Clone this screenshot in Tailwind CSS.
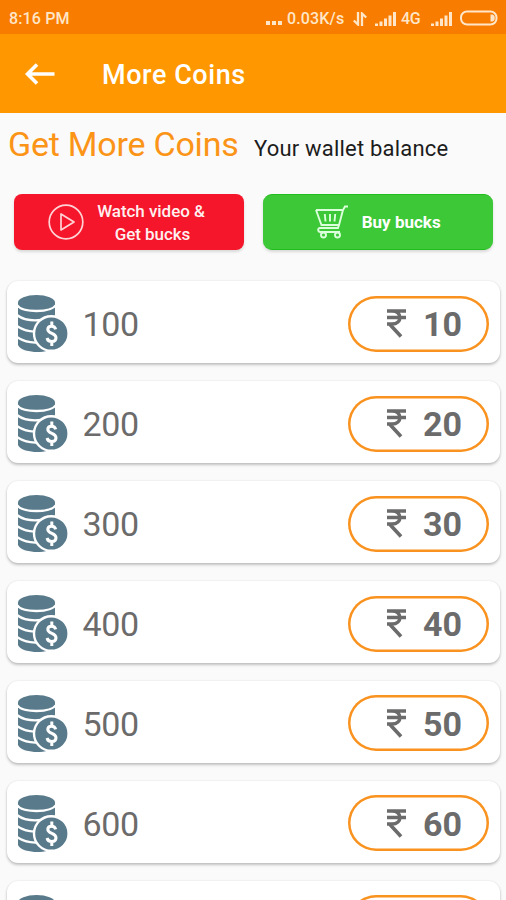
<!DOCTYPE html>
<html lang="en">
<head>
<meta charset="utf-8">
<title>More Coins</title>
<script src="https://cdn.jsdelivr.net/npm/@tailwindcss/browser@4"></script>
</head>
<body class="bg-[#fafafa]">
<svg class="hidden">
  <symbol id="coins" viewBox="0 0 51 58">
    <g fill="#587a8b">
      <path d="M0 8V50C2 55 12 57 19 57C27 57 34 55 37 51V8Z"/>
      <ellipse cx="18.500" cy="7.500" rx="18.500" ry="7.500"/>
    </g>
    <g fill="none" stroke="#fff" stroke-width="2.300">
      <path d="M-1 10C4 18 33 18 38 10"/>
      <path d="M-1 20C6 25.500 14 26 23 25"/>
      <path d="M-1 31C5 35.500 12 37 19 36.500"/>
      <path d="M-1 42C5 46.500 12 48 20 47.500"/>
    </g>
    <circle cx="33.300" cy="38.500" r="17.300" fill="#587a8b" stroke="#fff" stroke-width="2.400"/>
    <path d="M37.700 34.300C36.700 30 29.800 30.200 29.800 34.300C29.800 39.300 38 37.500 38 42.700C38 47.500 30.300 48 29 43M33.800 26.500V31.500M33.800 46V51" fill="none" stroke="#fff" stroke-width="3"/>
  </symbol>
  <symbol id="signal" viewBox="0 0 21 15">
    <path d="M0 12.500H3V15H0ZM4.500 10.500H7.500V15H4.500ZM9 7.500H12V15H9ZM13.500 4.500H16.500V15H13.500ZM18 1H21V15H18Z"/>
  </symbol>
</svg>
<div class="w-[506px] h-[900px] overflow-hidden flex flex-col font-[Roboto,sans-serif]">
  <div class="h-[34px] shrink-0 bg-[#f87c00] text-[#ffe6c8] flex items-center pt-[3px] pl-[9px] pr-[8px] text-[16px] font-medium whitespace-nowrap">
    <span class="w-[62px] tracking-[0.150px]">8:16 PM</span>
    <span class="ml-auto flex items-end gap-[2px] h-[13px]"><i class="size-[4px] bg-current"></i><i class="size-[4px] bg-current"></i><i class="size-[4px] bg-current"></i></span>
    <span class="ml-[5px] w-[58px] tracking-[0.150px]">0.03K/s</span>
    <svg class="ml-[8px] w-[14px] h-[14px]" viewBox="0 0 14 14" fill="none" stroke="currentColor" stroke-width="2.300"><path d="M5 0V12.500L0.800 8.500M9 14V1.500L13.200 5.500"/></svg>
    <svg class="ml-[8px] w-[21px] h-[15px]" fill="currentColor"><use href="#signal"/></svg>
    <span class="ml-[5px] w-[20px] tracking-[-0.300px]">4G</span>
    <svg class="ml-[10px] w-[21px] h-[15px]" fill="currentColor"><use href="#signal"/></svg>
    <svg class="ml-[8px] mb-[2px] w-[38px] h-[16px]" viewBox="0 0 38 16" fill="none" stroke="currentColor" stroke-width="2"><rect x="1" y="1.500" width="35.500" height="13" rx="6"/><path d="M30.500 4.500H32.500C35.500 5 35.500 11 32.500 11.500H30.500Z" fill="currentColor" stroke="none"/></svg>
  </div>
  <header class="h-[79px] shrink-0 bg-[#ff9800] flex items-center text-white">
    <svg class="ml-[25px] w-[30px] h-[24px]" viewBox="0 0 30 24" fill="none" stroke="currentColor" stroke-width="3.600"><path d="M29.500 12H3M12 2.500L2.500 12L12 21.500"/></svg>
    <h1 class="ml-[47px] mt-[4px] text-[27px] font-medium tracking-[0.550px]">More Coins</h1>
  </header>
  <div class="h-[81px] shrink-0 flex items-baseline pl-[8px] pt-[10px] whitespace-nowrap">
    <h2 class="w-[246px] text-[34px] leading-[42px] text-[#fb9417] tracking-[-0.220px]">Get More Coins</h2>
    <p class="text-[22px] text-[#1c1c1c] tracking-[0.200px]">Your wallet balance</p>
  </div>
  <div class="h-[56px] shrink-0 flex gap-[18.500px] pl-[14px] pr-[13px] text-white font-medium">
    <button class="flex-1 flex items-center rounded-[8px] bg-[#f5162b] shadow-[0_2px_3px_#0002]">
      <svg class="ml-[34px] size-[36px]" viewBox="0 0 36 36" fill="none" stroke="#ffd3d5" stroke-width="1.700"><circle cx="18" cy="18" r="16.800"/><path d="M13 10V26L26 18Z" stroke-linejoin="round"/></svg>
      <span class="ml-[11px] w-[112px] text-[17px] leading-[23px] pt-[2px] text-center text-[#fff0f0] tracking-[-0.050px] whitespace-nowrap"><span class="block">Watch video &amp;</span><span class="block pl-[3px]">Get bucks</span></span>
    </button>
    <button class="flex-1 flex items-center rounded-[9px] bg-[#3cc837] border-y border-[#20bd1b] shadow-[0_2px_3px_#0002]">
      <svg class="ml-[52px] w-[34px] h-[34px]" viewBox="0 0 34 34" fill="none" stroke="#dcffdc" stroke-width="1.900"><path d="M1 5H28L24 20H6.500L1 5M33 1.500H30L28 5M24 20L23 23H5C2.500 23 2.500 27 5.500 27H25"/><path d="M9.800 9L10.500 16.500M15 9V16.500M20.200 9L19.500 16.500"/><circle cx="8.500" cy="30" r="2.500"/><circle cx="22.500" cy="30" r="2.500"/></svg>
      <span class="ml-[13px] mt-[2px] text-[17px] font-bold whitespace-nowrap">Buy bucks</span>
    </button>
  </div>
  <main id="rows" class="pt-[31.400px] pl-[7px] pr-[6px] flex flex-col gap-[17.900px]"></main>
</div>
<template id="row">
  <section class="h-[82px] shrink-0 flex items-center bg-white rounded-[11px] pl-[10.500px] pr-[11px] shadow-[0_2px_3px_#00000038,0_0_2px_#0000001c] text-[#6b6b6b] text-[34px]">
    <svg class="w-[51px] h-[58px] mt-[4px]"><use href="#coins"/></svg>
    <span class="amount ml-[14px] mt-[5px] tracking-[-0.300px]"></span>
    <span class="ml-auto mt-[3px] w-[141px] h-[56px] rounded-full shadow-[inset_0_0_0_2.500px_#f9921e] flex items-center font-bold">
      <svg class="ml-[39px] w-[19px] h-[29px]" viewBox="0 0 19 29" fill="none" stroke="currentColor" stroke-width="3.600"><path d="M0 2H19M0 8.500H19M0 15H5C15.500 15 15.500 2 5 2M2.500 15L14 27.500"/></svg>
      <span class="price ml-[17px] mt-[2px]"></span>
    </span>
  </section>
</template>
<script>
  const template = document.getElementById('row');
  const offers = [[100, 10], [200, 20], [300, 30], [400, 40], [500, 50], [600, 60], ['', '']];
  for (const [coins, price] of offers) {
    const row = template.content.cloneNode(true);
    row.querySelector('.amount').textContent = coins;
    row.querySelector('.price').textContent = price;
    document.getElementById('rows').append(row);
  }
</script>
</body>
</html>
